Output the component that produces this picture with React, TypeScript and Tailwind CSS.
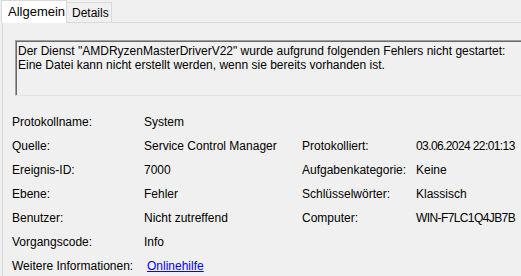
const rows: [string, string, string?, string?][] = [
  ["Protokollname:", "System"],
  ["Quelle:", "Service Control Manager", "Protokolliert:", "03.06.2024 22:01:13"],
  ["Ereignis-ID:", "7000", "Aufgabenkategorie:", "Keine"],
  ["Ebene:", "Fehler", "Schlüsselwörter:", "Klassisch"],
  ["Benutzer:", "Nicht zutreffend", "Computer:", "WIN-F7LC1Q4JB7B"],
  ["Vorgangscode:", "Info"],
];

export default function App() {
  return (
    <div className="w-[521px] h-[276px] overflow-hidden bg-[#f0f0f0] text-[12px] text-black font-['Liberation_Sans',Arial,sans-serif]">
      {/* tabs */}
      <div className="flex items-end h-[23px] pl-px">
        <div className="h-[23px] w-[66px] bg-white border-t border-l border-r border-[#d9d9d9] flex items-center pl-[6px] text-[13px] relative z-10">
          Allgemein
        </div>
        <div className="h-[21px] w-[45px] bg-[#f0f0f0] border-t border-r border-[#d9d9d9] border-b flex items-center pl-[5px]">
          Details
        </div>
        <div className="flex-1 h-px bg-[#d9d9d9]" />
      </div>

      <div className="ml-[2px] border-l border-[#d9d9d9] h-[253px] pt-[17px]">
        {/* message box */}
        <div className="ml-[12px] h-[56px] border-t border-l border-[#a0a0a0] shadow-[inset_1px_1px_0_#696969] border-b border-b-[#e3e3e3] pl-[2px] pt-[3px] leading-[14px] whitespace-nowrap">
          <div>Der Dienst "AMDRyzenMasterDriverV22" wurde aufgrund folgenden Fehlers nicht gestartet:</div>
          <div>Eine Datei kann nicht erstellt werden, wenn sie bereits vorhanden ist.</div>
        </div>

        {/* details grid */}
        <div className="mt-[14px] pl-[9px] grid grid-cols-[132px_158px_114px_1fr] auto-rows-[24px] items-center whitespace-nowrap">
          {rows.map(([a, b, c, d], i) => (
            <div key={i} className="contents">
              <div>{a}</div>
              <div>{b}</div>
              <div>{c ?? ""}</div>
              <div className={i === 1 || i === 4 ? "tracking-[-0.6px]" : ""}>{d ?? ""}</div>
            </div>
          ))}
          <div>Weitere Informationen:</div>
          <div className="pl-[3px]">
            <span className="text-[#0000ff] underline">Onlinehilfe</span>
          </div>
        </div>
      </div>
    </div>
  );
}
